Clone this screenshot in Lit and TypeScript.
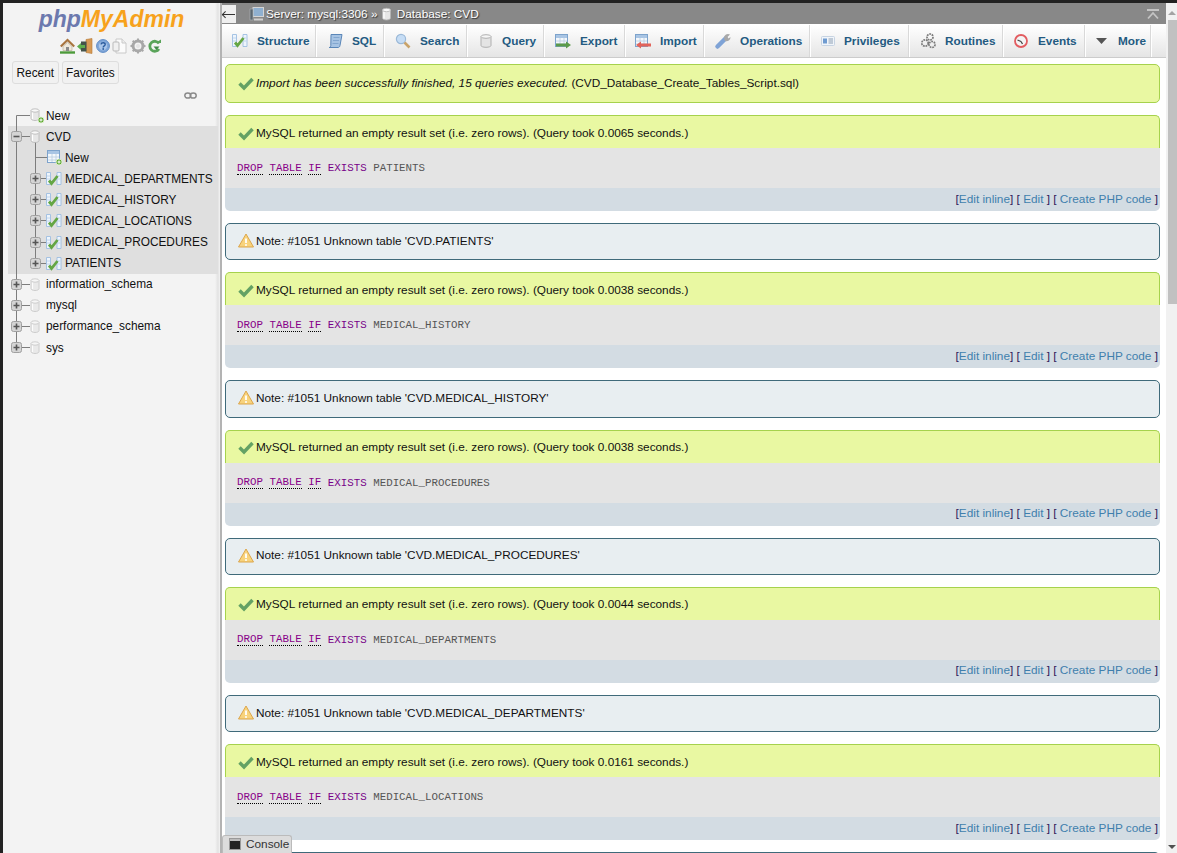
import { LitElement, html, css, svg } from "lit";
import { customElement } from "lit/decorators.js";

const dbShape = (x: number, y: number, o = 1) => svg`
  <g transform="translate(${x} ${y})" opacity="${o}">
    <path d="M1 2.5v8c0 1.2 1.8 2 4 2s4-.8 4-2v-8z" fill="#e6e6e6" stroke="#b5b5b5" stroke-width=".8"/>
    <ellipse cx="5" cy="2.5" rx="4" ry="1.7" fill="#f8f8f8" stroke="#b5b5b5" stroke-width=".8"/>
    <path d="M2.5 4.5v6.5" stroke="#fff" stroke-width="1.2"/>
  </g>`;

const greenDot = (x: number, y: number) => svg`
  <circle cx="${x}" cy="${y}" r="3" fill="#5aa62e" stroke="#e8f5d8" stroke-width=".8"/>
  <path d="M${x - 1.6} ${y}h3.2M${x} ${y - 1.6}v3.2" stroke="#fff" stroke-width="1"/>`;

const tableGrid = (x: number, y: number) => svg`
  <g transform="translate(${x} ${y})">
    <rect x=".5" y=".5" width="12" height="12" fill="#f4f8fc" stroke="#7da3cc"/>
    <rect x="1" y="1" width="11" height="3" fill="#a9c5e4"/>
    <path d="M1 7h11M1 10h11M5 4v8M9 4v8" stroke="#b9cbdf" stroke-width=".8"/>
  </g>`;

const structIcon = (x: number, y: number) => svg`
  <g transform="translate(${x} ${y})">
    <path d="M.5 .5h4v12h-4zM11 .5h4v12h-4z" fill="#eef5fc" stroke="#9dbde1" stroke-width=".9"/>
    <path d="M1 4h3M1 7h3M11.500 4h3M11.500 7h3" stroke="#c0d6ee"/>
    <path d="M3 8.500l2.500 3 6-7.500" fill="none" stroke="#64a644" stroke-width="2.800"/>
  </g>`;

const box = (x: number, y: number, plus: boolean) => svg`
  <rect x="${x + .5}" y="${y + .5}" width="10" height="10" rx="2" fill="#d4d4d4" stroke="#a0a0a0"/>
  <path d="M${x + 2.5} ${y + 5.5}h6${plus ? `M${x + 5.5} ${y + 2.5}v6` : ""}" stroke="#555" stroke-width="1.6"/>`;

const I = (w: number, h: number, body: unknown) =>
  html`<svg class="ic" width=${w} height=${h} viewBox="0 0 ${w} ${h}">${body}</svg>`;

const icons: Record<string, unknown> = {
  home: I(15, 16, svg`
    <path d="M.8 8.500L7.500 2l6.700 6.500" fill="none" stroke="#a9753f" stroke-width="2.200"/>
    <path d="M3 8.500L7.500 4.500l4.500 4v4H3z" fill="#efe9dc" stroke="#b5a98f" stroke-width=".6"/>
    <rect x="6" y="9" width="3" height="4" fill="#8a8a8a"/>
    <path d="M0 14.500h15" stroke="#4d9a3a" stroke-width="2.400"/>`),
  exit: I(16, 16, svg`
    <path d="M9 1.500l6-1v15l-6-1z" fill="#d79a55" stroke="#b57a38" stroke-width=".6"/>
    <rect x="4" y="3.500" width="5.500" height="10" fill="#44534a"/>
    <path d="M0 8.500l4-3.500v2h4v3H4v2z" fill="#5eae4e"/>`),
  help: I(14, 16, svg`
    <circle cx="7" cy="8" r="6.400" fill="#7fa6d8" stroke="#5f8cc6"/>
    <circle cx="7" cy="8" r="4.200" fill="#a9c6ea"/>
    <path d="M5 6.400c.2-2.200 4.200-2.200 4.200 0 0 1.600-2 1.400-2 3" fill="none" stroke="#2b5c9e" stroke-width="1.400"/>
    <circle cx="7.200" cy="11" r=".9" fill="#2b5c9e"/>`),
  docs: I(15, 16, svg`
    <path d="M4 1h6l4 4v10H4z" fill="#fbfbfb" stroke="#c9c9c9"/>
    <rect x="1" y="4" width="6" height="9" rx="1" fill="#f0f0f0" stroke="#b9b9b9"/>
    <path d="M10 1v4h4" fill="#eee" stroke="#c9c9c9"/>`),
  gear: I(16, 16, svg`
    <circle cx="8" cy="8" r="5" fill="none" stroke="#a8a8a8" stroke-width="3"/>
    <path d="M8 .5v15M.5 8h15M2.700 2.700l10.600 10.600M13.300 2.700L2.700 13.300" stroke="#a8a8a8" stroke-width="2" stroke-dasharray="2.400 10.200"/>
    <circle cx="8" cy="8" r="2" fill="#e6e6e6"/>`),
  reload: I(13, 16, svg`
    <path d="M11 5.500A5 5 0 1 0 11 11" fill="none" stroke="#5aa45a" stroke-width="2.800"/>
    <path d="M7 5h6V1.500z" fill="#5aa45a"/><path d="M5.500 8.500h6l-3 3.500z" fill="#3f8a46"/>`),
  chain: I(13, 7, svg`
    <ellipse cx="3.800" cy="3.500" rx="3" ry="2.600" fill="none" stroke="#8b8b8b" stroke-width="1.500"/>
    <ellipse cx="9.200" cy="3.500" rx="3" ry="2.600" fill="none" stroke="#8b8b8b" stroke-width="1.500"/>`),
  server: I(14, 16, svg`
    <rect x="3" y="1.500" width="10.500" height="9" fill="#8fb0d0" stroke="#d4d4d4"/>
    <rect x="0" y="3" width="3" height="11" fill="#5c6770" stroke="#aeb4b8" stroke-width=".6"/>
    <path d="M4 13.500h9" stroke="#cfcfcf" stroke-width="2"/>`),
  dbw: I(11, 14, svg`${dbShape(.5, .5)}`),
  up: I(12, 11, svg`<path d="M0 1h12M1 9.500L6 4l5 5.500" fill="none" stroke="#c4c4c4" stroke-width="1.800"/>`),
  check: I(16, 14, svg`
    <path d="M1.500 7.500l4.500 4.500 8.500-9" fill="none" stroke="#64a264" stroke-width="3.400"/>`),
  warn: I(16, 15, svg`
    <path d="M8 1L15.500 14H.5z" fill="#f8d37c" stroke="#dca64c"/>
    <path d="M8 5.500v4.500" stroke="#fff" stroke-width="1.800"/><circle cx="8" cy="12" r="1" fill="#fff"/>`),
  structure: I(16, 16, svg`${structIcon(0, 1)}`),
  sql: I(15, 16, svg`
    <path d="M3 1.500h11l-2 11c-.2 1.300-1 2-2 2H1c1 0 1.600-.7 1.800-2z" fill="#a6c3e3" stroke="#5a86b8"/>
    <path d="M5.500 4.500h6M5 7.500h6M4.500 10.500h6" stroke="#7ea3cd" stroke-width=".9"/>`),
  search: I(16, 16, svg`
    <circle cx="6" cy="6" r="4.600" fill="#c6ddf5" stroke="#9bb9d8" stroke-width="1.200"/>
    <path d="M9.500 9.500l5 5" stroke="#c9a36a" stroke-width="2.600"/>`),
  query: I(14, 16, svg`
    <path d="M2 3.500v9c0 1 2.200 1.800 5 1.800s5-.8 5-1.800v-9z" fill="#e4e4e4" stroke="#b0b0b0"/>
    <ellipse cx="7" cy="3.500" rx="5" ry="1.800" fill="#f6f6f6" stroke="#b0b0b0"/>`),
  export: I(16, 16, svg`${tableGrid(0, 1)}<path d="M1 10.500h10v-2l5 3.500-5 3.500v-2H1z" fill="#5a9a4a"/>`),
  import: I(16, 16, svg`${tableGrid(0, 1)}<path d="M16 10.500H6v-2l-5 3.500 5 3.500v-2h10z" fill="#e2635a"/>`),
  operations: I(16, 16, svg`
    <path d="M2.500 13.500l8-8" stroke="#7fa3d6" stroke-width="4.500" stroke-linecap="round"/>
    <path d="M9 5a4 4 0 0 1 6-3.500L12.500 4l1 1.500 2-1.500A4 4 0 0 1 10 8z" fill="#a8a8a8"/>`),
  privileges: I(14, 16, svg`
    <rect x=".5" y="3.500" width="13" height="9" rx="1" fill="#f1f5fa" stroke="#c6d3e2"/>
    <rect x="2" y="5.500" width="4" height="5" fill="#6f9bd0"/>
    <path d="M7.500 6h4.500M7.500 8h4.500M7.500 10h4.500" stroke="#8d9fb3"/>`),
  routines: I(16, 16, svg`
    <g fill="none" stroke="#7a7a7a" stroke-width="1.700" stroke-dasharray="1.800 .8">
      <circle cx="10" cy="4" r="3"/><circle cx="5" cy="10" r="3.200"/><circle cx="12" cy="11.500" r="3"/>
    </g>`),
  events: I(16, 16, svg`
    <circle cx="8" cy="8" r="6" fill="#f4f4f4" stroke="#e25c60" stroke-width="1.800"/>
    <path d="M8 8.500L4.500 7M8 8.500l1.500 2.500" stroke="#444" stroke-width="1.300"/>`),
  more: I(14, 16, svg`<path d="M1 5h11L6.500 11z" fill="#555"/>`),
  console: I(12, 12, svg`<rect x=".5" y=".5" width="11" height="11" fill="#222" stroke="#999"/><rect x="1" y="1" width="10" height="2" fill="#bbb"/>`),
};

type Row = { t: string; nested?: boolean; kind: string; last?: boolean };
const top1: Row[] = [{ t: "New", kind: "topnew" }];
const cvd: Row[] = [
  { t: "CVD", kind: "cvd" },
  { t: "New", kind: "tnew", nested: true },
  { t: "MEDICAL_DEPARTMENTS", kind: "tbl", nested: true },
  { t: "MEDICAL_HISTORY", kind: "tbl", nested: true },
  { t: "MEDICAL_LOCATIONS", kind: "tbl", nested: true },
  { t: "MEDICAL_PROCEDURES", kind: "tbl", nested: true },
  { t: "PATIENTS", kind: "tbl", nested: true, last: true },
];
const rest: Row[] = [
  { t: "information_schema", kind: "db" },
  { t: "mysql", kind: "db" },
  { t: "performance_schema", kind: "db" },
  { t: "sys", kind: "db", last: true },
];

const line = "#7d7d7d";
function gutter(r: Row) {
  const w = r.nested ? 57 : 38;
  const m = 10.5;
  let b: unknown = "";
  if (r.kind === "topnew")
    b = svg`<path d="M8.500 ${m}V23M8.500 ${m}H22" stroke="${line}" fill="none"/>${dbShape(22, 3)}${greenDot(33, 15)}`;
  if (r.kind === "cvd")
    b = svg`<path d="M8.500 -1V23M14 ${m}H22M27.500 16V23" stroke="${line}" fill="none"/>${box(3, 5, false)}${dbShape(22, 4)}`;
  if (r.kind === "tnew")
    b = svg`<path d="M8.500 -1V23M27.500 -1V23M27.500 ${m}H39" stroke="${line}" fill="none"/>${tableGrid(39, 3)}${greenDot(51, 15)}`;
  if (r.kind === "tbl")
    b = svg`<path d="M8.500 -1V23M27.500 -1V${r.last ? m : 23}M33 ${m}H38" stroke="${line}" fill="none"/>${box(22, 5, true)}${structIcon(38, 4)}`;
  if (r.kind === "db")
    b = svg`<path d="M8.500 -1V${r.last ? m : 23}M14 ${m}H22" stroke="${line}" fill="none"/>${box(3, 5, true)}${dbShape(22, 4, .75)}`;
  return html`<svg class="gut" width=${w} height="21" viewBox="0 0 ${w} 21">${b}</svg>`;
}
const renderRows = (rows: Row[]) =>
  rows.map((r) => html`<div class="row">${gutter(r)}<span>${r.t}</span></div>`);

const tabs = [
  ["structure", "Structure", 95, 10],
  ["sql", "SQL", 68, 11],
  ["search", "Search", 83, 10],
  ["query", "Query", 77, 11],
  ["export", "Export", 81, 10],
  ["import", "Import", 79, 9],
  ["operations", "Operations", 106, 10],
  ["privileges", "Privileges", 99, 10],
  ["routines", "Routines", 94, 10],
  ["events", "Events", 82, 9],
  ["more", "More", 66, 9],
] as [string, string, number, number][];

const queries = [
  ["PATIENTS", "0.0065"],
  ["MEDICAL_HISTORY", "0.0038"],
  ["MEDICAL_PROCEDURES", "0.0038"],
  ["MEDICAL_DEPARTMENTS", "0.0044"],
  ["MEDICAL_LOCATIONS", "0.0161"],
];

@customElement("app-root")
export class AppRoot extends LitElement {
  static styles = css`
    :host {
      display: block;
      height: 853px;
      overflow: hidden;
      background: #222;
      font: 11.800px "Liberation Sans", Arial, sans-serif;
      color: #000;
    }
    .page { display: flex; height: 850px; margin: 3px 0 0 3px; position: relative; }
    svg { display: block; flex: none; overflow: visible; }

    .side {
      width: 217px; flex: none; background: linear-gradient(to right, #f3f3f3 212px, #e2e2e2 215px, #f3f3f3 217px);
      display: flex; flex-direction: column; font-size: 11.850px;
    }
    .logo {
      height: 33px; display: flex; align-items: center; justify-content: center;
      font: italic bold 23px "Liberation Sans", Arial, sans-serif; padding-bottom: 1px; box-sizing: border-box;
    }
    .logo b { color: #6c79ae; } .logo i { color: #f7a21c; font-style: inherit; }
    .quick { height: 19px; display: flex; justify-content: center; gap: 2.500px; align-items: center; padding-right: 2px; }
    .btns { display: flex; gap: 3px; margin: 6px 0 0 9px; height: 23px; }
    .btns span {
      border: 1px solid #ddd; border-radius: 3px; background: #f1f1f1;
      padding: 0 3.500px; display: flex; align-items: center; color: #111;
    }
    .chain { height: 21px; display: flex; justify-content: flex-end; align-items: center; padding: 2px 23px 0 0; box-sizing: border-box; }
    .tree { margin-left: 5px; width: 210px; }
    .hl { background: #dfdfdf; }
    .row { height: 21.100px; display: flex; align-items: center; white-space: nowrap; color: #111; }
    .gut { align-self: flex-start; }

    .rule { width: 2px; background: #b3b3b3; flex: none; }
    .main { flex: 1; display: flex; flex-direction: column; min-width: 0; background: #fff; position: relative; overflow: hidden; }
    .work { width: 944px; flex: none; }
    .bar {
      height: 21px; box-sizing: border-box; padding-top: 1px; background: #888; display: flex; align-items: center; color: #fff;
      text-shadow: 1px 1px 1px #333; white-space: pre;
    }
    .back {
      width: 14px; height: 18px; background: #efefef; margin-right: 14px; position: relative;
    }
    .back::before { content: ""; display: block; margin: 9px 1px 0 1px; height: 1px; background: #333; }
    .back::after {
      content: ""; position: absolute; left: 1px; top: 7px; width: 3.500px; height: 3.500px;
      border-left: 1px solid #333; border-bottom: 1px solid #333; transform: rotate(45deg);
    }
    .bar .ic { margin-right: 2px; }
    .bar .sp { flex: 1; }
    .bar .upi { margin-right: 5px; }
    .dbname { margin-left: 3px; }
    .tabs {
      margin-top: 1px; height: 32px; border-bottom: 1px solid #ccc;
      background: linear-gradient(#fff, #e5e5e5); display: flex; padding-right: 13px;
    }
    .tab {
      display: flex; align-items: center; box-sizing: border-box; color: #235a81; font-weight: bold;
      border-right: 1px solid #d9d9d9; box-shadow: 1px 0 0 #fff; margin-right: 1px; white-space: nowrap;
    }
    .tab .ic { margin-right: 9px; }
    .tab:nth-child(11) { margin-right: 0; }
    .content { padding: 6px 6px 0 3px; display: flex; flex-direction: column; gap: 12px; }
    .msg {
      border: 1px solid #a6d24d; background: #e9f8a2; border-radius: 5px; height: 39px; box-sizing: border-box;
      display: flex; align-items: center; padding: 0 0 1px 12px; white-space: nowrap; color: #111; gap: 2px;
    }
    .msg em { font-style: italic; }
    .note {
      border: 1px solid #3f6a7a; background: #e8eef1; border-radius: 5px; height: 37.300px; box-sizing: border-box;
      display: flex; align-items: center; padding: 0 0 2px 12px; color: #111; gap: 2px; flex: none;
    }
    .group { height: 96px; display: flex; flex-direction: column; flex: none; }
    .ghead {
      height: 33px; box-sizing: border-box; border: 1px solid #a6d24d; border-bottom: 0;
      border-radius: 5px 5px 0 0; background: #e9f8a2; display: flex; align-items: center;
      padding: 1px 0 0 12px; color: #111; gap: 2px; white-space: nowrap;
    }
    .code {
      height: 40px; background: #e4e4e4; padding-left: 12px; display: flex; align-items: center; gap: 6.500px;
      font: 10.800px "Liberation Mono", monospace; color: #555;
    }
    .kw { color: #808; border-bottom: 1px dotted #000; line-height: 12px; }
    .kx { color: #708; line-height: 12px; }
    .tools {
      height: 23px; background: #d3dce3; border-radius: 0 0 5px 5px; display: flex; align-items: center;
      justify-content: flex-end; padding: 0 2px 2px 0; box-sizing: border-box; color: #301a5a; white-space: pre;
    }
    .tools a { color: #3f7fad; text-decoration: none; }
    .console {
      position: absolute; left: 0; bottom: 0; width: 70px; height: 18px; box-sizing: border-box;
      background: #dcdcdc; border: 1px solid #bbb; border-bottom: 0; border-radius: 3px 3px 0 0;
      display: flex; align-items: center; padding: 0 0 1px 6px; gap: 5px; color: #333;
    }
    .scroll { width: 11px; flex: none; background: #f1f1f1; display: flex; flex-direction: column; align-items: flex-end; }
    .arrow-up { width: 0; height: 0; border: 4px solid transparent; border-top: 0; border-bottom-color: #a3a3a3; margin: 8px 1px 0 0; }
    .thumb { width: 9px; height: 284px; background: #c1c1c1; margin-top: 5px; }
    .scroll .sp { flex: 1; }
    .arrow-dn { width: 0; height: 0; border: 4px solid transparent; border-bottom: 0; border-top-color: #505050; margin: 0 1px 4px 0; }
  `;

  render() {
    return html`<div class="page">
      <aside class="side">
        <div class="logo"><b>php</b><i>MyAdmin</i></div>
        <div class="quick">
          ${icons.home}${icons.exit}${icons.help}${icons.docs}${icons.gear}${icons.reload}
        </div>
        <div class="btns"><span>Recent</span><span>Favorites</span></div>
        <div class="chain">${icons.chain}</div>
        <div class="tree">
          ${renderRows(top1)}
          <div class="hl">${renderRows(cvd)}</div>
          ${renderRows(rest)}
        </div>
      </aside>
      <div class="rule"></div>
      <div class="main">
        <div class="work">
          <div class="bar">
            <div class="back"></div>
            ${icons.server}<span>Server: mysql:3306 » </span>${icons.dbw}<span class="dbname">Database: CVD</span>
            <span class="sp"></span><span class="upi">${icons.up}</span>
          </div>
          <nav class="tabs">
            ${tabs.map(
              ([ic, label, w, p]) =>
                html`<div class="tab" style="width:${w - 1}px;padding-left:${p}px">${icons[ic]}<span>${label}</span></div>`
            )}
          </nav>
          <div class="content">
            <div class="msg">
              ${icons.check}<span><em>Import has been successfully finished, 15 queries executed.</em> (CVD_Database_Create_Tables_Script.sql)</span>
            </div>
            ${queries.map(
              ([name, time], i) => html`
                <div class="group">
                  <div class="ghead">${icons.check}<span>MySQL returned an empty result set (i.e. zero rows). (Query took ${time} seconds.)</span></div>
                  <div class="code"><span class="kw">DROP</span><span class="kw">TABLE</span><span class="kw">IF</span><span class="kx">EXISTS</span><span>${name}</span></div>
                  <div class="tools">[<a>Edit inline</a>] [ <a>Edit</a> ] [ <a>Create PHP code</a> ]</div>
                </div>
                ${i < queries.length - 1
                  ? html`<div class="note">${icons.warn}<span>Note: #1051 Unknown table 'CVD.${name}'</span></div>`
                  : html`<div class="note"></div>`}
              `
            )}
          </div>
        </div>
        <div class="console">${icons.console}<span>Console</span></div>
      </div>
      <div class="scroll">
        <div class="arrow-up"></div><div class="thumb"></div><div class="sp"></div><div class="arrow-dn"></div>
      </div>
    </div>`;
  }
}
